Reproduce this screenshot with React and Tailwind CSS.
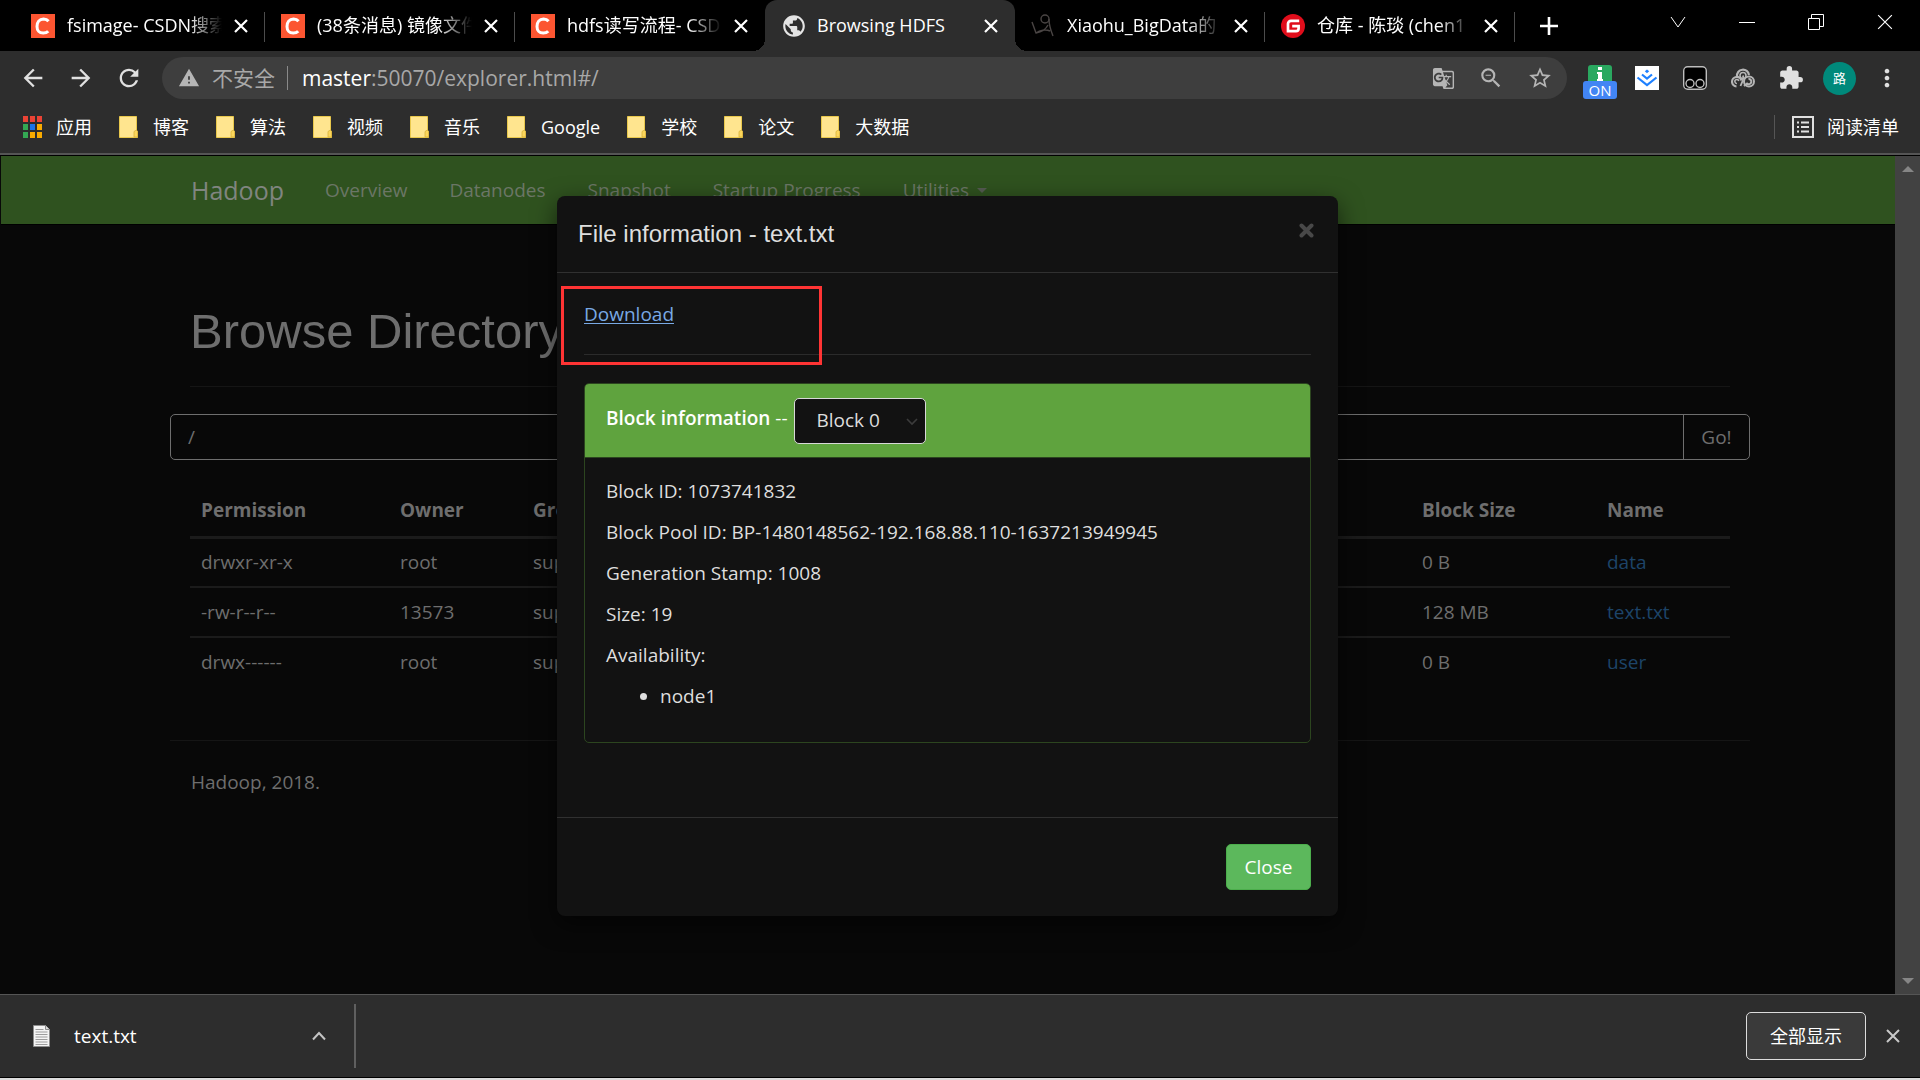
import React from "react";
import {
  MdArrowBack,
  MdArrowForward,
  MdExtension,
  MdGTranslate,
  MdMoreVert,
  MdPublic,
  MdRefresh,
  MdStarBorder,
  MdWarning,
  MdZoomOut,
} from "react-icons/md";

const CsdnIcon = () => (
  <svg className="size-6" viewBox="0 0 24 24" aria-hidden="true">
    <rect width="24" height="24" fill="#fc5531" />
    <path d="M17.500 7.200C16.400 5.800 14.700 5 12.600 5 8.200 5.200 6 8.400 6 12.400c0 4 2.300 6.700 6.200 6.700 2 0 3.800-.6 5-1.900" fill="none" stroke="#fff" strokeWidth="3" />
  </svg>
);

const SketchIcon = () => (
  <svg className="size-6" viewBox="0 0 24 24" fill="none" stroke="#4a4544" strokeWidth="1.400" aria-hidden="true">
    <circle cx="14" cy="5" r="4" />
    <path d="M18 5c0 6 2 12 4 17M17 11c-2 4-6 7-12 8L1 8M5 19c4-3 10-4 14-2" />
  </svg>
);

const GiteeIcon = () => (
  <svg className="size-6" viewBox="0 0 24 24" aria-hidden="true">
    <circle cx="12" cy="12" r="12" fill="#e00d1b" />
    <path d="M18.200 6.800H10a3 3 0 0 0-3 3v7.400h8a2.600 2.600 0 0 0 2.600-2.600v-2.400h-6.400" fill="none" stroke="#fff" strokeWidth="2.700" />
  </svg>
);

const GlobeIcon = () => <MdPublic className="size-[26px] text-[#e4e4e4]" />;

const Cross = ({ className }) => (
  <svg className={className} viewBox="0 0 14 14" fill="none" stroke="currentColor" aria-hidden="true">
    <path d="M1 1l12 12M13 1L1 13" />
  </svg>
);

const tabs = [
  { title: "fsimage- CSDN搜索", Icon: CsdnIcon, line: true },
  { title: "(38条消息) 镜像文件", Icon: CsdnIcon, line: true },
  { title: "hdfs读写流程- CSD", Icon: CsdnIcon },
  { title: "Browsing HDFS", Icon: GlobeIcon, active: true },
  { title: "Xiaohu_BigData的", Icon: SketchIcon, line: true },
  { title: "仓库 - 陈琰 (chen1", Icon: GiteeIcon, line: true },
];

function TabStrip() {
  return (
    <div className="flex h-[51px] shrink-0 bg-black pl-[15px]">
      {tabs.map(({ title, Icon, active, line }) => (
        <div
          key={title}
          className={
            active
              ? "relative flex w-[250px] items-center rounded-t-xl bg-[#2d2d2d] pl-4 pr-4"
              : "relative flex w-[250px] items-center pl-4 pr-4"
          }
        >
          {active && (
            <>
              <span className="absolute -left-3 bottom-0 size-3 bg-[radial-gradient(circle_at_0_0,#000_12px,#2d2d2d_12px)]" />
              <span className="absolute -right-3 bottom-0 size-3 bg-[radial-gradient(circle_at_100%_0,#000_12px,#2d2d2d_12px)]" />
            </>
          )}
          <span className="flex w-9 shrink-0">
            <Icon />
          </span>
          <span
            className={
              active
                ? "w-[155px] overflow-hidden whitespace-nowrap"
                : "w-[155px] overflow-hidden whitespace-nowrap [mask-image:linear-gradient(to_right,black_78%,transparent)]"
            }
          >
            {title}
          </span>
          <button aria-label="关闭标签页" className="ml-3 shrink-0">
            <Cross className="size-[14px] stroke-[2.200]" />
          </button>
          {line && <span className="absolute right-0 top-3 h-[30px] w-px bg-[#4c4c4c]" />}
        </div>
      ))}
      <button aria-label="新标签页" className="ml-[25px] self-center">
        <svg className="size-[18px]" viewBox="0 0 18 18" stroke="#fff" strokeWidth="2.600" aria-hidden="true">
          <path d="M9 0v18M0 9h18" />
        </svg>
      </button>
      <div className="ml-auto flex h-11 items-center gap-[53px] pr-[27px]">
        <button aria-label="搜索标签页">
          <svg className="size-4" viewBox="0 0 16 16" fill="none" stroke="#fff" aria-hidden="true">
            <path d="M1 3l7 10 7-10" />
          </svg>
        </button>
        <button aria-label="最小化">
          <svg className="size-4" viewBox="0 0 16 16" stroke="#fff" aria-hidden="true">
            <path d="M0 8.500h16" />
          </svg>
        </button>
        <button aria-label="还原">
          <svg className="size-4" viewBox="0 0 16 16" fill="none" stroke="#fff" aria-hidden="true">
            <path d="M.5 4.500h11v11H.5zM3.500 4.500v-4h12v12h-4" />
          </svg>
        </button>
        <button aria-label="关闭">
          <Cross className="size-4 stroke-1" />
        </button>
      </div>
    </div>
  );
}

function Extensions() {
  return (
    <div className="flex items-center">
      <button aria-label="扩展 ON" className="relative mt-2 flex h-[34px] w-[34px] flex-col items-center">
        <svg className="h-[17px] w-6" viewBox="0 0 24 17" aria-hidden="true">
          <path d="M3 0h18a3 3 0 0 1 3 3v14H0V3a3 3 0 0 1 3-3z" fill="#2aa860" />
          <path d="M10 2h4v3h-4zM9 7h5v7h1v2H9v-2h1V9H9z" fill="#fff" />
        </svg>
        <span className="absolute inset-x-0 top-4 rounded-[3px] bg-[#4285f4] text-center text-[15px] leading-[18px] text-white">ON</span>
      </button>
      <button aria-label="下载助手" className="ml-[18px]">
        <svg className="size-6" viewBox="0 0 24 24" fill="none" stroke="#1e80ff" strokeWidth="2.200" aria-hidden="true">
          <rect width="24" height="24" fill="#fff" stroke="none" />
          <path d="M12 3.500l2.200 1.800L12 7.200 9.800 5.300z" fill="#1e80ff" stroke="none" />
          <path d="M7 8.500l5 4 5-4M2.500 11.500l9.500 7.600 9.500-7.600" />
        </svg>
      </button>
      <button aria-label="用户脚本" className="ml-6">
        <svg className="size-6" viewBox="0 0 24 24" fill="#000" stroke="#bdbdbd" strokeWidth="1.400" aria-hidden="true">
          <rect x=".7" y=".7" width="22.600" height="22.600" rx="4" />
          <circle cx="7" cy="17.500" r="4" />
          <circle cx="17" cy="17.500" r="4" />
        </svg>
      </button>
      <button aria-label="云盘" className="ml-6">
        <svg className="size-6" viewBox="0 0 24 24" fill="none" stroke="#b5b5b5" aria-hidden="true">
          <path d="M6 10.500a6 6 0 0 1 12-1.500" strokeWidth="2.200" />
          <circle cx="12" cy="9.500" r="3" strokeWidth="1.600" />
          <path d="M12 9.500c1 4-1 7-2.500 10.500" strokeWidth="1.800" />
          <path d="M5.500 20.500a4.800 4.800 0 1 1 5-6" strokeWidth="2.200" />
          <path d="M6 17.500a2 2 0 1 1 1.800-2.500" strokeWidth="1.600" />
          <circle cx="18" cy="15.500" r="5" strokeWidth="2" />
          <path d="M17.500 13a2.600 2.600 0 1 1-1.500 4.500L13 20" strokeWidth="2" />
        </svg>
      </button>
      <button aria-label="扩展程序" className="ml-[23px]">
        <MdExtension className="size-[26px] text-[#e0e0e0]" />
      </button>
      <button aria-label="个人资料" className="ml-[19px] flex size-[33px] items-center justify-center rounded-full bg-[#00897b] text-[13px] text-white">
        路
      </button>
      <button aria-label="菜单" className="ml-[17px]">
        <MdMoreVert className="size-7 text-[#e0e0e0]" />
      </button>
    </div>
  );
}

function Toolbar() {
  return (
    <div className="flex h-[54px] shrink-0 items-center bg-[#2d2d2d] pl-[19px] pr-[19px] text-[#e0e0e0]">
      <button aria-label="后退"><MdArrowBack className="size-7" /></button>
      <button aria-label="前进" className="ml-5"><MdArrowForward className="size-7" /></button>
      <button aria-label="重新加载" className="ml-5"><MdRefresh className="size-7" /></button>
      <div className="ml-[19px] flex h-[42px] flex-1 items-center rounded-full bg-[#3e3e3e] pl-4 pr-[14px] text-[21px] text-[#a8a8a8]">
        <MdWarning className="mr-3 size-[22px] text-[#b5b5b5]" />
        <span>不安全</span>
        <span className="ml-3 mr-[14px] h-6 w-px bg-[#8a8a8a]" />
        <span>
          <span className="text-white">master</span>:50070/explorer.html#/
        </span>
        <div className="ml-auto flex items-center gap-[23px] text-[#b5b5b5]">
          <button aria-label="翻译"><MdGTranslate className="size-[23px]" /></button>
          <button aria-label="缩小"><MdZoomOut className="size-[26px]" /></button>
          <button aria-label="收藏"><MdStarBorder className="size-[26px]" /></button>
        </div>
      </div>
      <div className="ml-4">
        <Extensions />
      </div>
    </div>
  );
}

const Folder = () => (
  <svg className="h-[22px] w-[19px]" viewBox="0 0 19 22" aria-hidden="true">
    <path d="M.5.500h17v14l1 1v6H.5z" fill="#ffe58f" stroke="#e9c84c" />
    <path d="M15 21v-5.500l2.500-1.500 1 1.500V21z" fill="#fbd65c" stroke="#d9b23b" strokeWidth=".8" />
  </svg>
);

const appColors = ["#ea4335", "#ea4335", "#ea4335", "#34a853", "#1a73e8", "#f9ab00", "#34a853", "#f9ab00", "#f9ab00"];
const bookmarks = ["博客", "算法", "视频", "音乐", "Google", "学校", "论文", "大数据"];

function Bookmarks() {
  return (
    <div className="shrink-0 border-b-2 border-[#555] bg-[#2d2d2d] pb-1">
      <div className="flex h-11 items-center px-[23px]">
        <button className="flex items-center gap-[14px]">
          <span className="grid grid-cols-3 gap-[2px]">
            {appColors.map((c, i) => (
              <span key={i} className="h-[6px] w-[5px]" style={{ background: c }} />
            ))}
          </span>
          应用
        </button>
        <div className="ml-[27px] flex items-center gap-[27px]">
          {bookmarks.map((b) => (
            <button key={b} className="flex items-center gap-[15px]">
              <Folder />
              {b}
            </button>
          ))}
        </div>
        <div className="ml-auto flex h-6 items-center border-l border-[#555] pl-[17px]">
          <button className="flex items-center gap-[13px]">
            <svg className="size-[22px]" viewBox="0 0 22 22" fill="none" stroke="#e0e0e0" strokeWidth="2" aria-hidden="true">
              <rect x="1" y="1" width="20" height="20" />
              <path d="M5 6.500h2M9 6.500h8M5 11h2M9 11h8M5 15.500h2M9 15.500h8" />
            </svg>
            <span className="-mr-[2px]">阅读清单</span>
          </button>
        </div>
      </div>
    </div>
  );
}

const rows = [
  ["drwxr-xr-x", "root", "supergroup", "0 B", "data"],
  ["-rw-r--r--", "13573", "supergroup", "128 MB", "text.txt"],
  ["drwx------", "root", "supergroup", "0 B", "user"],
];

function ExplorerPage() {
  return (
    <div className="min-w-0 flex-1 overflow-hidden bg-[#080808] text-[19px] text-[#6e6e6e]">
      <nav className="ml-px flex h-[69px] items-center border-b border-black bg-[#2f521f] pl-[190px] pt-px text-[#6b7666]">
        <a href="#" className="mr-[41px] text-[25px] text-[#808580]">Hadoop</a>
        <div className="flex gap-[42px]">
          <a href="#">Overview</a>
          <a href="#">Datanodes</a>
          <a href="#">Snapshot</a>
          <a href="#">Startup Progress</a>
          <a href="#" className="flex items-center gap-2">
            Utilities
            <span className="border-x-[5px] border-t-[5px] border-x-transparent border-t-[#555b52]" />
          </a>
        </div>
      </nav>
      <div className="pl-[170px] pr-[145px]">
        <header className="mx-5 border-b border-[#151515] pb-[27px] pt-[78px]">
          <h1 className="font-['Liberation_Sans',sans-serif] text-[49px] leading-[56px]">Browse Directory</h1>
        </header>
        <form className="mt-[27px] flex h-[46px] rounded-[5px] border border-[#6e6e6e]" onSubmit={(e) => e.preventDefault()}>
          <input aria-label="Directory" defaultValue="/" className="min-w-0 flex-1 bg-transparent px-[17px] outline-none" />
          <button className="w-[66px] border-l border-[#6e6e6e]">Go!</button>
        </form>
        <div className="mx-5 mt-[25px]">
          <table className="w-full table-fixed text-left">
            <colgroup>
              <col className="w-[199px]" />
              <col className="w-[133px]" />
              <col />
              <col className="w-[185px]" />
              <col className="w-[134px]" />
            </colgroup>
            <thead>
              <tr className="h-[52px] border-b-[3px] border-[#1b1b1b]">
                {["Permission", "Owner", "Group", "Block Size", "Name"].map((h) => (
                  <th key={h} className="pl-[11px] font-bold">{h}</th>
                ))}
              </tr>
            </thead>
            <tbody>
              {rows.map((r) => (
                <tr key={r[0]} className="h-[50px] border-b-2 border-[#1b1b1b] last:border-b-0">
                  {r.slice(0, 4).map((c, i) => (
                    <td key={i} className="pl-[11px]">{c}</td>
                  ))}
                  <td className="pl-[11px]">
                    <a href="#" className="text-[#1d4468]">{r[4]}</a>
                  </td>
                </tr>
              ))}
            </tbody>
          </table>
        </div>
        <footer className="mt-[53px] border-t border-[#151515] px-[21px] pt-[27px] leading-[28px]">Hadoop, 2018.</footer>
      </div>
    </div>
  );
}

function FileModal() {
  return (
    <div role="dialog" aria-label="File information" className="relative mx-auto w-full max-w-[781px] rounded-lg bg-[#121212] text-[19px] text-[#dedede] shadow-[0_8px_24px_rgba(0,0,0,0.6)]">
      <div className="flex items-center justify-between border-b border-[#303030] px-[21px] pb-[20px] pt-[20px]">
        <h4 className="font-['Liberation_Sans',sans-serif] text-[24px] leading-[36px]">File information - text.txt</h4>
        <button aria-label="Dismiss" className="mb-[7px] mr-[3px] text-[#484848]">
          <svg className="size-[15px]" viewBox="0 0 15 15" fill="none" stroke="currentColor" strokeWidth="4" strokeLinecap="round" aria-hidden="true">
            <path d="M2.500 2.500l10 10M12.500 2.500l-10 10" />
          </svg>
        </button>
      </div>
      <div className="px-[27px] pt-[27px]">
        <div className="border-b border-[#2b2b2b] pb-[26px] leading-[28px]">
          <a href="#" className="text-[#79a9e4] underline underline-offset-2">Download</a>
        </div>
        <div className="mt-[28px] overflow-hidden rounded-[5px] border border-[#2c451f]">
          <div className="flex h-[74px] items-center border-b border-[#2c451f] bg-[#5fa33e] pl-[21px] text-white">
            <label htmlFor="block" className="pb-1">
              <span className="font-semibold">Block information</span> --
            </label>
            <div className="relative ml-[6px]">
              <select id="block" className="h-[46px] w-[132px] appearance-none rounded-[5px] border border-[#d8d8d8] bg-[#121212] pl-[22px] text-[#dedede]">
                <option>Block 0</option>
              </select>
              <svg className="pointer-events-none absolute right-2 top-5 h-2 w-3" viewBox="0 0 12 8" fill="none" stroke="#3c3c3c" strokeWidth="1.600" aria-hidden="true">
                <path d="M1 1l5 5 5-5" />
              </svg>
            </div>
          </div>
          <div className="flex flex-col gap-[13px] px-[21px] pb-[32px] pt-[19px] leading-[28px]">
            <p>Block ID: 1073741832</p>
            <p>Block Pool ID: BP-1480148562-192.168.88.110-1637213949945</p>
            <p>Generation Stamp: 1008</p>
            <p>Size: 19</p>
            <p>Availability:</p>
            <ul className="list-disc pl-[54px]">
              <li>node1</li>
            </ul>
          </div>
        </div>
      </div>
      <div className="mt-[74px] flex justify-end border-t border-[#303030] px-[27px] py-[26px]">
        <button className="h-[46px] w-[85px] rounded-[5px] border border-[#4cae4c] bg-[#5cb85c] text-white">Close</button>
      </div>
      <div className="pointer-events-none absolute left-1 top-[90px] h-[79px] w-[261px] border-[3px] border-[#ff3434]" />
    </div>
  );
}

function Scrollbar() {
  return (
    <div className="flex w-[25px] shrink-0 flex-col items-center justify-between bg-[#424242] py-[10px]">
      <span className="border-x-[6px] border-b-[6px] border-x-transparent border-b-[#868686]" />
      <span className="border-x-[6px] border-t-[6px] border-x-transparent border-t-[#868686]" />
    </div>
  );
}

function DownloadBar() {
  return (
    <div className="flex h-[84px] shrink-0 items-center border-b border-t border-b-black border-t-[#555] bg-[#2d2d2d] pr-5">
      <div className="flex h-16 w-[356px] items-center border-r-2 border-[#5f5f5f] pl-[33px] pr-7">
        <svg className="h-[22px] w-[17px]" viewBox="0 0 17 22" aria-hidden="true">
          <path d="M.5.500h12l4 4v17H.5z" fill="#f4f4f4" stroke="#8d8d8d" />
          <path d="M12.500.500v4h4" fill="#ddd" stroke="#8d8d8d" />
          <path d="M2.500 4.500h8M2.500 7h12M2.500 9.500h12M2.500 12h12M2.500 14.500h12M2.500 17h12M2.500 19.500h12" stroke="#9c9c9c" />
        </svg>
        <span className="ml-6 text-[19px]">text.txt</span>
        <button aria-label="更多选项" className="ml-auto">
          <svg className="h-[10px] w-[14px]" viewBox="0 0 14 10" fill="none" stroke="#c4c4c4" strokeWidth="2" aria-hidden="true">
            <path d="M1 8.500l6-6.500 6 6.500" />
          </svg>
        </button>
      </div>
      <button className="ml-auto h-12 w-[120px] rounded-[5px] border border-[#dcdcdc] bg-[#3a3a3a]">全部显示</button>
      <button aria-label="关闭下载栏" className="ml-5 text-[#c8c8c8]">
        <Cross className="size-[14px] stroke-2" />
      </button>
    </div>
  );
}

export default function App() {
  return (
    <div className="flex h-screen flex-col overflow-hidden bg-black font-['Open_Sans','Noto_Sans_CJK_SC',sans-serif] text-[18px] leading-[27px] text-white">
      <TabStrip />
      <Toolbar />
      <Bookmarks />
      <main className="flex min-h-0 flex-1 pt-px">
        <div className="relative flex min-w-0 flex-1">
          <ExplorerPage />
          <div className="absolute inset-x-0 top-[40px]">
            <FileModal />
          </div>
        </div>
        <Scrollbar />
      </main>
      <DownloadBar />
      <div className="h-[2px] shrink-0 bg-[#dcdcdc]" />
    </div>
  );
}
